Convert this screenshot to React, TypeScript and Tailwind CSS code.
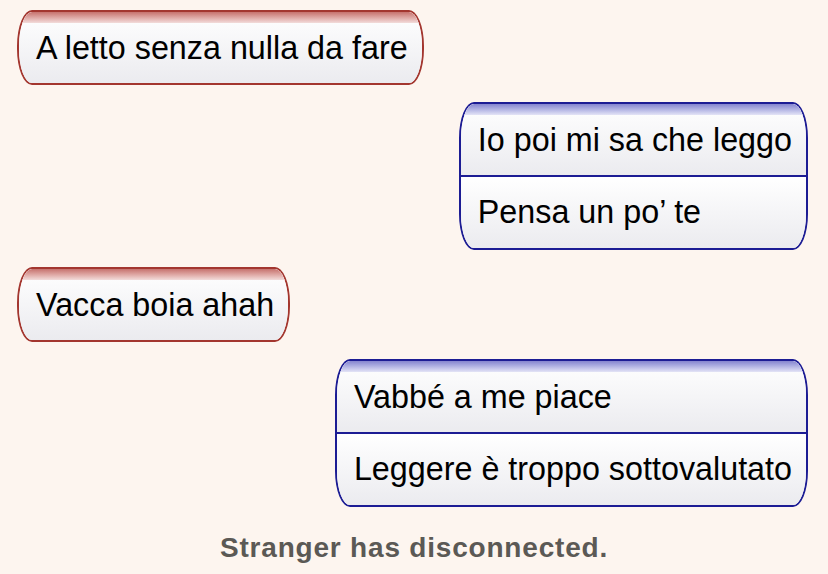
import React from "react";

type Side = "stranger" | "you";

interface Bubble {
  side: Side;
  lines: string[];
}

const messages: Bubble[] = [
  { side: "stranger", lines: ["A letto senza nulla da fare"] },
  { side: "you", lines: ["Io poi mi sa che leggo", "Pensa un po’ te"] },
  { side: "stranger", lines: ["Vacca boia ahah"] },
  { side: "you", lines: ["Vabbé a me piace", "Leggere è troppo sottovalutato"] },
];

function ChatBubble({ side, lines }: Bubble) {
  const isYou = side === "you";
  return (
    <div
      className={`relative overflow-hidden [border-radius:15px_/_36px] border-2 ${
        isYou ? "self-end mr-[20px] border-[#1c1c94]" : "self-start ml-[17px] border-[#a3362f]"
      }`}
    >
      {/* coloured cap */}
      <div
        className={`absolute inset-x-0 top-0 h-[11px] bg-gradient-to-b ${
          isYou ? "from-[#8585cf] to-[#e4e4f6]" : "from-[#c6726e] to-[#f2dcdb]"
        }`}
      />
      {lines.map((line, i) => (
        <div
          key={i}
          className={`flex items-center pl-[17px] pr-[14px] bg-gradient-to-b from-white to-[#ebebef] ${
            i > 0
              ? isYou
                ? "h-[73px] border-t-2 border-[#1c1c94]"
                : "h-[73px] border-t-2 border-[#a3362f]"
              : "h-[71px] pt-[2px]"
          }`}
        >
          <span className="text-[32.3px] leading-[37px] text-black">{line}</span>
        </div>
      ))}
    </div>
  );
}

export default function App() {
  return (
    <div
      className="min-h-screen w-full bg-[#fdf5ef] pt-[10px]"
      style={{ fontFamily: "'Liberation Sans', Arial, sans-serif" }}
    >
      <div className="flex flex-col gap-[17px]">
        {messages.map((m, i) => (
          <ChatBubble key={i} {...m} />
        ))}
      </div>
      <p className="mt-[25px] text-center text-[28px] leading-[32px] font-bold tracking-[0.8px] text-[#5b5955]">
        Stranger has disconnected.
      </p>
    </div>
  );
}
